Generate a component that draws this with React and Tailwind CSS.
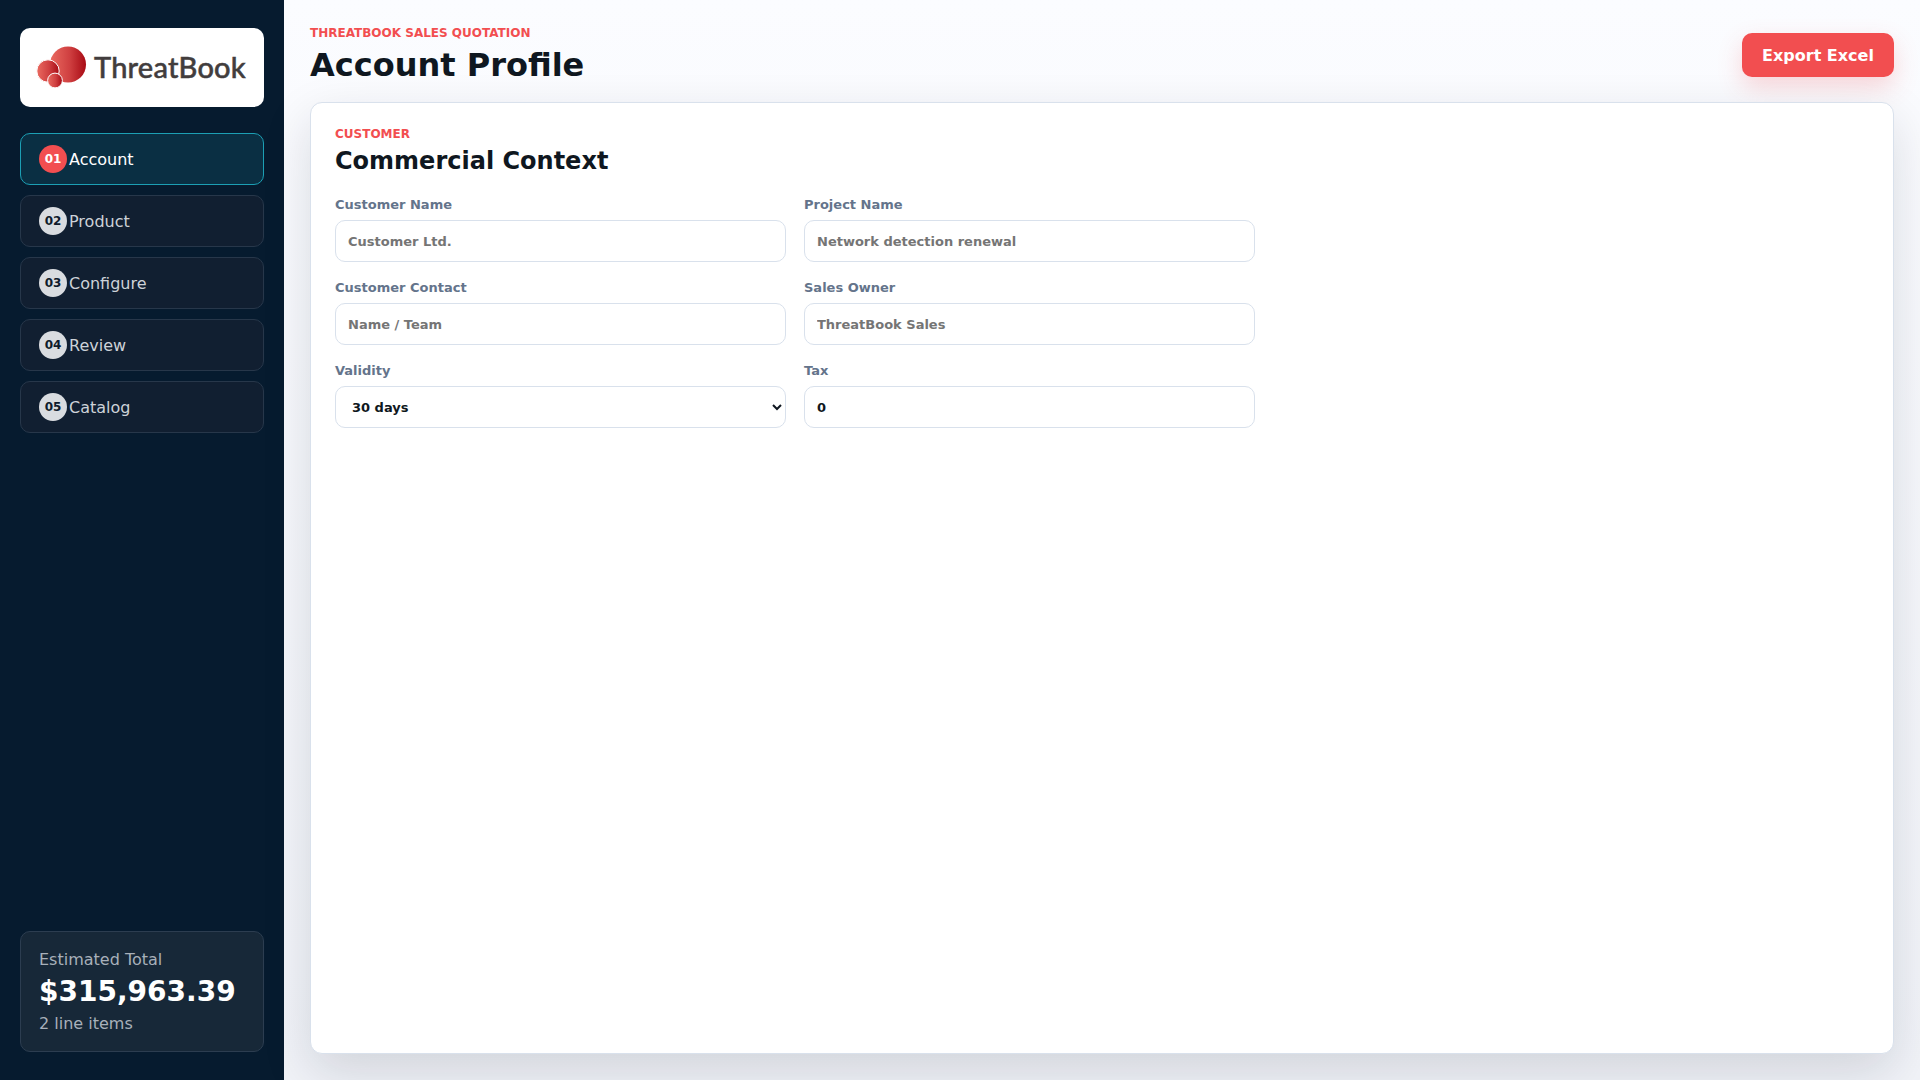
const navItems = [
  { num: "01", label: "Account", active: true },
  { num: "02", label: "Product" },
  { num: "03", label: "Configure" },
  { num: "04", label: "Review" },
  { num: "05", label: "Catalog" },
];

const Logo = () => (
  <div className="flex h-[79px] items-center rounded-[10px] bg-white pl-[14px]">
    <svg width="62" height="50" viewBox="0 0 62 50" className="shrink-0">
      <defs>
        <linearGradient id="tb" x1="0" y1="0" x2="1" y2="0">
          <stop offset="0" stopColor="#ea6a60" />
          <stop offset="0.55" stopColor="#cf3f40" />
          <stop offset="1" stopColor="#a80a14" />
        </linearGradient>
      </defs>
      <circle cx="34" cy="21.5" r="18" fill="url(#tb)" />
      <circle cx="14" cy="28" r="11.2" fill="url(#tb)" stroke="#fff" strokeWidth="1" />
      <circle cx="21" cy="37.5" r="7.4" fill="url(#tb)" stroke="#fff" strokeWidth="1" />
    </svg>
    <span className="mb-[2px] ml-[-2px] font-['Lato',sans-serif] text-[29px] font-medium leading-none tracking-[0.2px] text-[#423d3d] [-webkit-text-stroke:0.5px_#423d3d]">
      ThreatBook
    </span>
  </div>
);

const Sidebar = () => (
  <aside className="flex h-screen w-[284px] shrink-0 flex-col bg-[#061b2f] px-5 pt-7 pb-[28px]">
    <Logo />
    <nav className="mt-[26px] flex flex-col gap-[10px]">
      {navItems.map((item) => (
        <div
          key={item.num}
          className={
            item.active
              ? "flex h-[52px] items-center rounded-[10px] border border-[#1c9fb4] bg-[#0a2f43] pl-[18px] text-[16px] text-white"
              : "flex h-[52px] items-center rounded-[10px] border border-[#27374a] bg-[#111f31] pl-[18px] text-[16px] text-[#cdd2d8]"
          }
        >
          <span
            className={
              item.active
                ? "mr-[2px] flex h-7 w-7 items-center justify-center rounded-full bg-[#f24e50] text-[12px] font-bold text-white"
                : "mr-[2px] flex h-7 w-7 items-center justify-center rounded-full bg-[#d9dce0] text-[12px] font-bold text-[#0f1b2c]"
            }
          >
            {item.num}
          </span>
          <span className="pt-[2px]">{item.label}</span>
        </div>
      ))}
    </nav>
    <div className="mt-auto flex h-[121px] flex-col rounded-[10px] border border-[#2c3d50] bg-[#172838] pl-[18px] pt-[17px]">
      <div className="text-[16px] leading-[22px] text-[#a8b0ba]">Estimated Total</div>
      <div className="mt-[3px] text-[28px] font-bold leading-[36px] text-white">$315,963.39</div>
      <div className="mt-[2px] text-[16px] leading-[24px] text-[#a8b0ba]">2 line items</div>
    </div>
  </aside>
);

const Field = ({ label, placeholder, value }) => (
  <label className="flex flex-col">
    <span className="mb-[7px] text-[13px] font-bold leading-[16px] text-[#64748b]">{label}</span>
    <input
      readOnly
      value={value}
      placeholder={placeholder}
      className="h-[42px] rounded-[10px] border border-[#d9e1ec] bg-white px-3 text-[13px] font-bold text-[#0f1720] placeholder:text-[#757575]"
    />
  </label>
);

const App = () => (
  <div className="flex h-screen overflow-hidden font-['DejaVu_Sans',sans-serif]">
    <Sidebar />
    <main className="flex min-w-0 flex-1 flex-col bg-gradient-to-b from-[#fbfcff] to-[#f1f3f8] pl-[26px] pr-[26px] pb-[26px]">
      <header className="flex h-[102px] shrink-0 items-start justify-between">
        <div className="pt-[25px]">
          <div className="text-[12px] font-bold leading-[16px] text-[#f24e50]">
            THREATBOOK SALES QUOTATION
          </div>
          <h1 className="mt-[4px] text-[32px] font-bold leading-[40px] text-[#0f1720]">Account Profile</h1>
        </div>
        <button className="mt-[33px] h-[44px] w-[152px] rounded-[10px] bg-[#f24e50] pt-[2px] text-[16px] font-bold text-white shadow-[0_10px_24px_rgba(242,78,80,0.22)]">
          Export Excel
        </button>
      </header>
      <section className="flex-1 rounded-[12px] border border-[#d9e1ec] bg-white px-6 pt-[23px] shadow-[0_18px_50px_rgba(15,23,42,0.14)]">
        <div className="text-[12px] font-bold leading-[16px] text-[#f24e50]">CUSTOMER</div>
        <h2 className="mt-[3px] text-[24px] font-bold leading-[32px] text-[#0f1720]">Commercial Context</h2>
        <div className="mt-[20px] grid w-[920px] grid-cols-2 gap-x-[18px] gap-y-[18px]">
          <Field label="Customer Name" placeholder="Customer Ltd." />
          <Field label="Project Name" placeholder="Network detection renewal" />
          <Field label="Customer Contact" placeholder="Name / Team" />
          <Field label="Sales Owner" placeholder="ThreatBook Sales" />
          <label className="flex flex-col">
            <span className="mb-[7px] text-[13px] font-bold leading-[16px] text-[#64748b]">Validity</span>
            <select
              defaultValue="30"
              className="h-[42px] rounded-[10px] border border-[#d9e1ec] bg-white px-3 text-[13px] font-bold text-[#0f1720]"
            >
              <option value="30">30 days</option>
              <option value="60">60 days</option>
              <option value="90">90 days</option>
            </select>
          </label>
          <Field label="Tax" value="0" />
        </div>
      </section>
    </main>
  </div>
);

export default App;
